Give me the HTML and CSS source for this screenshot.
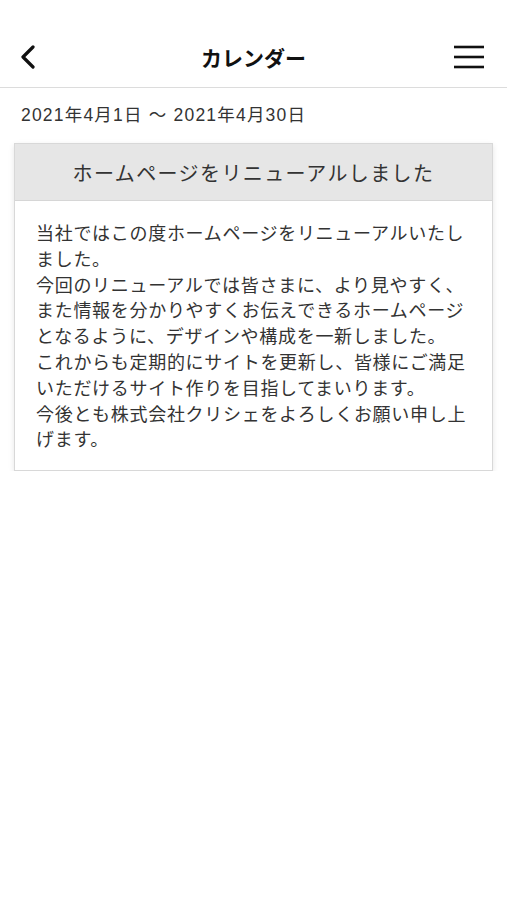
FILE: index.html
```html
<!DOCTYPE html>
<html lang="ja">
<head>
<meta charset="utf-8">
<title>カレンダー</title>
<link rel="stylesheet" href="styles.css">
</head>
<body>
<header class="app-header">
  <div class="bar">
    <button class="icon-btn back" aria-label="戻る">
      <svg width="20" height="24" viewBox="0 0 20 24"><path d="M15 2 L5 12 L15 22" fill="none" stroke="#111" stroke-width="3.2" stroke-linecap="round" stroke-linejoin="round"/></svg>
    </button>
    <h1 class="title">カレンダー</h1>
    <button class="icon-btn menu" aria-label="メニュー">
      <svg width="32" height="24" viewBox="0 0 32 24"><g stroke="#111" stroke-width="2.6"><line x1="1" y1="2" x2="31" y2="2"/><line x1="1" y1="12" x2="31" y2="12"/><line x1="1" y1="22" x2="31" y2="22"/></g></svg>
    </button>
  </div>
</header>
<main class="content">
  <p class="period">2021年4月1日 〜 2021年4月30日</p>
  <section class="card">
    <h2 class="card-title">ホームページをリニューアルしました</h2>
    <div class="card-body">
      <p>当社ではこの度ホームページをリニューアルいたしました。<br>今回のリニューアルでは皆さまに、より見やすく、また情報を分かりやすくお伝えできるホームページとなるように、デザインや構成を一新しました。<br>これからも定期的にサイトを更新し、皆様にご満足いただけるサイト作りを目指してまいります。<br>今後とも株式会社クリシェをよろしくお願い申し上げます。</p>
    </div>
  </section>
</main>
</body>
</html>
```
FILE: styles.css
```css
* { box-sizing: border-box; }
html, body { margin: 0; padding: 0; background: #fff; }
body {
  font-family: "Noto Sans CJK JP", "Noto Sans", sans-serif;
  color: #333;
}
.app-header {
  padding-top: 27px;
  border-bottom: 1px solid #dcdcdc;
}
.bar {
  height: 60px;
  display: flex;
  align-items: center;
  justify-content: space-between;
  padding: 0 22px 0 18px;
  position: relative;
}
.icon-btn {
  background: none;
  border: 0;
  padding: 0;
  margin: 0;
  display: flex;
  align-items: center;
  line-height: 0;
}
.title {
  position: absolute;
  left: 0; right: 0;
  margin: 0;
  text-align: center;
  font-size: 21px;
  font-weight: 700;
  color: #111;
  line-height: 30px;
  pointer-events: none;
}
.content { padding: 0 14px; }
.period {
  margin: 14px 0 15px 7px;
  font-family: "Liberation Sans", "Noto Sans CJK JP", sans-serif;
  font-size: 17.5px;
  line-height: 26px;
  color: #333;
  letter-spacing: 1.2px;
}
.card {
  border: 1px solid #d8d8d8;
  box-shadow: 0 2px 6px rgba(0,0,0,0.10);
  background: #fff;
}
.card-title {
  margin: 0;
  height: 57px;
  display: flex;
  align-items: center;
  justify-content: center;
  background: #e6e6e6;
  border-bottom: 1px solid #d6d6d6;
  font-size: 20px;
  font-weight: 400;
  letter-spacing: 1.4px;
  color: #333;
}
.card-body {
  padding: 19px 21px 18px;
}
.card-body p {
  margin: 0;
  font-size: 18px;
  line-height: 25.8px;
  letter-spacing: 0.7px;
  color: #333;
}
```
